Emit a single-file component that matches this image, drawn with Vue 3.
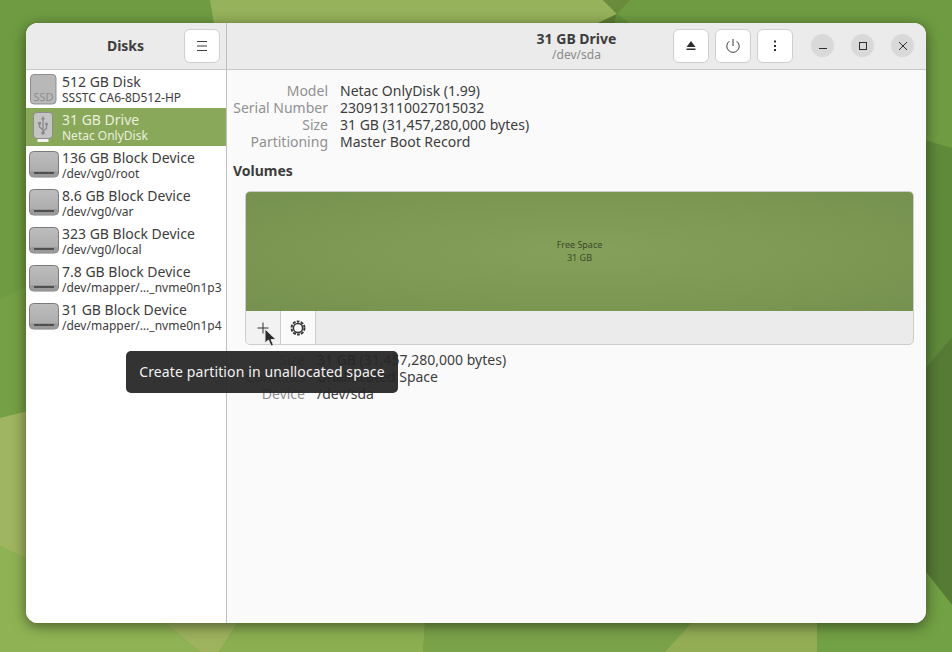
<script setup>
const disks = [
  { title: '512 GB Disk', sub: 'SSSTC CA6-8D512-HP', icon: 'ssd' },
  { title: '31 GB Drive', sub: 'Netac OnlyDisk', icon: 'usb', selected: true },
  { title: '136 GB Block Device', sub: '/dev/vg0/root', icon: 'block' },
  { title: '8.6 GB Block Device', sub: '/dev/vg0/var', icon: 'block' },
  { title: '323 GB Block Device', sub: '/dev/vg0/local', icon: 'block' },
  { title: '7.8 GB Block Device', sub: '/dev/mapper/…_nvme0n1p3', icon: 'block' },
  { title: '31 GB Block Device', sub: '/dev/mapper/…_nvme0n1p4', icon: 'block' },
]

const driveInfo = [
  ['Model', 'Netac OnlyDisk (1.99)'],
  ['Serial Number', '230913110027015032'],
  ['Size', '31 GB (31,457,280,000 bytes)'],
  ['Partitioning', 'Master Boot Record'],
]

const volumeInfo = [
  ['Size', '31 GB (31,457,280,000 bytes)'],
  ['Contents', 'Unallocated Space'],
  ['Device', '/dev/sda'],
]
</script>

<template>
  <div class="desktop">
    <svg class="wallpaper" viewBox="0 0 952 652" preserveAspectRatio="none" aria-hidden="true">
      <rect width="952" height="652" fill="#6f9c42" />
      <!-- top strip -->
      <polygon points="210,0 603,0 617,14 560,41 217,41" fill="#96b25a" />
      <polygon points="603,0 630,0 617,14" fill="#6a8a3c" />
      <polygon points="617,14 560,41 610,41" fill="#5c7d35" />
      <polygon points="617,14 610,41 655,41" fill="#65903b" />
      <!-- left edge -->
      <polygon points="0,300 40,280 40,408 0,418" fill="#76a045" />
      <polygon points="0,418 40,408 40,566 0,546" fill="#9fb55f" />
      <polygon points="0,546 40,566 40,652 0,652" fill="#8fb354" />
      <!-- bottom edge -->
      <polygon points="30,610 149,610 200,652 30,652" fill="#8fb354" />
      <polygon points="149,610 246,610 219,652 200,652" fill="#9db35e" />
      <polygon points="246,610 426,610 423,652 219,652" fill="#8bae51" />
      <polygon points="426,610 703,610 665,652 423,652" fill="#7aa249" />
      <polygon points="703,610 817,610 817,652 665,652" fill="#93ad55" />
      <polygon points="817,610 930,610 930,652 817,652" fill="#72a044" />
      <!-- right edge -->
      <polygon points="915,137 952,148 952,337 915,380" fill="#5f8a3a" />
      <polygon points="915,380 952,337 952,605 915,558" fill="#567b35" />
      <polygon points="915,558 952,605 952,652 915,652" fill="#72a044" />
    </svg>

    <div class="window">
      <aside class="sidebar">
        <header class="sidebar__head">
          <span class="sidebar__title">Disks</span>
          <button type="button" class="btn btn--menu">
            <svg width="16" height="16" viewBox="0 0 16 16" fill="none" stroke="#3d3d3d">
              <path d="M3 3.500h10M3 8h10M3 12.500h10" />
            </svg>
          </button>
        </header>
        <ul class="disks">
          <li
            v-for="disk in disks"
            :key="disk.title"
            class="disk"
            :class="{ 'disk--selected': disk.selected }"
          >
            <span class="disk__icon">
              <svg v-if="disk.icon === 'ssd'" width="30" height="31" viewBox="0 0 30 31">
                <rect x="1.500" y="0.500" width="25.500" height="29.500" rx="3.500" fill="#b8b8b8" stroke="#8f8f8f" />
                <text x="14.500" y="27" text-anchor="middle" class="ssd-label">SSD</text>
              </svg>
              <svg v-else-if="disk.icon === 'usb'" width="30" height="31" viewBox="0 0 30 31">
                <rect x="8.500" y="25" width="11" height="5" fill="#f2f2f2" />
                <rect x="4.500" y="0.500" width="19" height="26" rx="3.500" fill="#c4c4c4" stroke="#8c8c8c" />
                <path d="M14 7v14M14 18l-3.500-3v-3M14 19.500l3.500-3V13" fill="none" stroke="#8a8a8a" stroke-width="1.400" />
                <path d="M14 4l2 3.500h-4zM9 10h3v2.500H9z" fill="#8a8a8a" />
                <circle cx="17.500" cy="12" r="1.500" fill="#8a8a8a" />
                <circle cx="14" cy="21" r="1.800" fill="#8a8a8a" />
              </svg>
              <svg v-else width="30" height="28" viewBox="0 0 30 28">
                <rect x="0.500" y="0.500" width="29" height="25.500" rx="4" fill="url(#blockFill)" stroke="#7b7b7b" />
                <rect x="1" y="20" width="28" height="5.500" rx="2" fill="#9a9a9a" />
                <rect x="5" y="21" width="20" height="2" fill="#4f4f4f" />
                <defs>
                  <linearGradient id="blockFill" x1="0" y1="0" x2="0" y2="1">
                    <stop offset="0" stop-color="#bdbdbd" />
                    <stop offset="1" stop-color="#a9a9a9" />
                  </linearGradient>
                </defs>
              </svg>
            </span>
            <span class="disk__text">
              <span class="disk__title">{{ disk.title }}</span>
              <span class="disk__sub">{{ disk.sub }}</span>
            </span>
          </li>
        </ul>
      </aside>

      <main class="main">
        <header class="main__head">
          <div class="main__titles">
            <span class="main__title">31 GB Drive</span>
            <span class="main__subtitle">/dev/sda</span>
          </div>
          <div class="main__actions">
            <button type="button" class="btn">
              <svg width="16" height="16" viewBox="0 0 16 16" fill="#2e2e2e">
                <path d="M8 3 12.500 9h-9zM3.500 10.500h9V12h-9z" />
              </svg>
            </button>
            <button type="button" class="btn">
              <svg width="16" height="16" viewBox="0 0 16 16" fill="none" stroke="#3d3d3d">
                <path d="M8 1v7M4.300 3.200a6.200 6.200 0 1 0 7.400 0" />
              </svg>
            </button>
            <button type="button" class="btn">
              <svg width="16" height="16" viewBox="0 0 16 16" fill="#2e2e2e">
                <rect x="7" y="2.500" width="2" height="2" />
                <rect x="7" y="7" width="2" height="2" />
                <rect x="7" y="11" width="2" height="2" />
              </svg>
            </button>
          </div>
          <div class="wm">
            <button type="button" class="wm__btn">
              <svg width="12" height="12" viewBox="0 0 12 12" stroke="#2e2e2e"><path d="M2 8.500h8" /></svg>
            </button>
            <button type="button" class="wm__btn">
              <svg width="12" height="12" viewBox="0 0 12 12" fill="none" stroke="#2e2e2e"><rect x="2.500" y="2.500" width="7" height="7" /></svg>
            </button>
            <button type="button" class="wm__btn">
              <svg width="12" height="12" viewBox="0 0 12 12" stroke="#2e2e2e"><path d="M2 2l8 8M10 2l-8 8" /></svg>
            </button>
          </div>
        </header>

        <div class="content">
          <dl class="info">
            <template v-for="row in driveInfo" :key="row[0]">
              <dt>{{ row[0] }}</dt>
              <dd>{{ row[1] }}</dd>
            </template>
          </dl>

          <h2 class="volumes-title">Volumes</h2>

          <div class="volumes">
            <div class="volumes__map">
              <span>Free Space</span>
              <span>31 GB</span>
            </div>
            <div class="volumes__bar">
              <button type="button" class="tool tool--hover">
                <svg width="16" height="16" viewBox="0 0 16 16" stroke="#333"><path d="M8 2.500v11M2.500 8h11" /></svg>
              </button>
              <button type="button" class="tool tool--gear">
                <svg width="18" height="18" viewBox="0 0 18 18" fill="none" stroke="#333">
                  <circle cx="9" cy="9" r="4.600" stroke-width="1.500" />
                  <circle cx="9" cy="9" r="6.500" stroke-width="1.900" stroke-dasharray="2.800 1.280" />
                </svg>
              </button>
            </div>
          </div>

          <dl class="info info--volume">
            <template v-for="row in volumeInfo" :key="row[0]">
              <dt>{{ row[0] }}</dt>
              <dd>{{ row[1] }}</dd>
            </template>
          </dl>
        </div>
      </main>

      <div class="tooltip">Create partition in unallocated space</div>
      <svg class="cursor" width="14" height="20" viewBox="0 0 14 20" aria-hidden="true">
        <path d="M1 1v14l3.500-3 2.500 6 2.500-1-2.500-5.500H12z" fill="#2b2b2b" stroke="#e8e8e8" stroke-width="1" />
      </svg>
    </div>
  </div>
</template>

<style scoped>
.desktop {
  position: relative;
  width: 952px;
  height: 652px;
  padding: 23px 26px 29px;
  box-sizing: border-box;
  overflow: hidden;
  font-family: 'Noto Sans', 'Open Sans', sans-serif;
  color: #3d3d3d;
}

.wallpaper {
  position: absolute;
  inset: 0;
  width: 100%;
  height: 100%;
}

.window {
  position: relative;
  display: flex;
  width: 900px;
  height: 600px;
  border-radius: 12px;
  overflow: hidden;
  background: #fafafa;
  box-shadow: 0 3px 14px rgba(0, 0, 0, 0.5);
}

.sidebar {
  flex: 0 0 200px;
  display: flex;
  flex-direction: column;
  background: #fff;
  border-right: 1px solid #c0c0c0;
}

.sidebar__head,
.main__head {
  flex: 0 0 47px;
  box-sizing: border-box;
  display: flex;
  align-items: center;
  background: #ebebeb;
  border-bottom: 1px solid #c8c8c8;
}

.sidebar__head {
  position: relative;
  justify-content: center;
}

.sidebar__title {
  font-size: 14px;
  font-weight: 700;
  margin-right: 1px;
  margin-top: -1px;
}

.btn {
  width: 36px;
  height: 34px;
  padding: 0;
  display: flex;
  align-items: center;
  justify-content: center;
  background: #fff;
  border: 1px solid #cfcfcf;
  border-radius: 6px;
}

.btn--menu {
  position: absolute;
  right: 6px;
  top: 6px;
}

.disks {
  list-style: none;
  margin: 0;
  padding: 0;
}

.disk {
  height: 38px;
  display: flex;
  align-items: center;
  gap: 3px;
  padding-left: 3px;
  box-sizing: border-box;
}

.disk--selected {
  background: #8aa85a;
  color: #e9efdf;
}

.disk__icon {
  flex: 0 0 30px;
  display: flex;
  align-items: center;
  justify-content: center;
}

.ssd-label {
  font-size: 11px;
  fill: #8e8e8e;
}

.disk__text {
  display: flex;
  flex-direction: column;
  min-width: 0;
}

.disk__title {
  font-size: 14px;
  line-height: 18px;
  white-space: nowrap;
}

.disk__sub {
  margin-top: -1px;
  font-size: 12px;
  line-height: 15px;
  white-space: nowrap;
}

.main {
  flex: 1;
  display: flex;
  flex-direction: column;
  min-width: 0;
}

.main__head {
  position: relative;
  justify-content: flex-end;
  padding: 0 12px 1px 0;
}

.main__titles {
  position: absolute;
  left: 0;
  right: 0;
  display: flex;
  flex-direction: column;
  align-items: center;
}

.main__title {
  font-size: 14px;
  font-weight: 700;
  line-height: 17px;
}

.main__subtitle {
  font-size: 12px;
  line-height: 15px;
  color: #8a8a8a;
}

.main__actions {
  position: relative;
  display: flex;
  gap: 6px;
  margin-right: 18px;
}

.wm {
  position: relative;
  display: flex;
  gap: 17px;
}

.wm__btn {
  width: 23px;
  height: 23px;
  padding: 0;
  display: flex;
  align-items: center;
  justify-content: center;
  border: none;
  border-radius: 50%;
  background: #d9d9d9;
}

.content {
  flex: 1;
  background: #fafafa;
  padding: 12px 12px 0 6px;
}

.info {
  display: grid;
  grid-template-columns: 95px 1fr;
  column-gap: 12px;
  margin: 0;
  font-size: 14px;
  line-height: 17px;
}

.info dt {
  text-align: right;
  color: #919191;
  white-space: nowrap;
}

.info dd {
  margin: 0;
  white-space: nowrap;
}

.info--volume {
  grid-template-columns: 72px 1fr;
  margin-top: 6px;
}

.volumes-title {
  margin: 12px 0;
  font-size: 14px;
  line-height: 17px;
  font-weight: 700;
}

.volumes {
  margin-left: 12px;
  border: 1px solid #cdcdcd;
  border-radius: 5px;
  overflow: hidden;
  background: #ebebeb;
}

.volumes__map {
  height: 119px;
  padding-bottom: 2px;
  box-sizing: border-box;
  display: flex;
  flex-direction: column;
  align-items: center;
  justify-content: center;
  background: radial-gradient(ellipse at center, #84a05a 0%, #7a9651 70%, #769150 100%);
  color: #3d4a2a;
  font-size: 9px;
  line-height: 13px;
}

.volumes__bar {
  height: 33px;
  display: flex;
}

.tool {
  width: 35px;
  height: 33px;
  padding: 0;
  display: flex;
  align-items: center;
  justify-content: center;
  background: #ebebeb;
  border: none;
  border-right: 1px solid #cdcdcd;
}

.tool--gear {
  background: #fafafa;
}

.tool--hover {
  background: #f2f2f2;
}

.tooltip {
  position: absolute;
  left: 100px;
  top: 328px;
  width: 272px;
  height: 42px;
  padding-bottom: 2px;
  box-sizing: border-box;
  display: flex;
  align-items: center;
  justify-content: center;
  border-radius: 5px;
  background: rgba(38, 38, 38, 0.94);
  color: #f2f2f2;
  font-size: 14px;
  letter-spacing: 0.11px;
}

.cursor {
  position: absolute;
  left: 238px;
  top: 305px;
}
</style>
